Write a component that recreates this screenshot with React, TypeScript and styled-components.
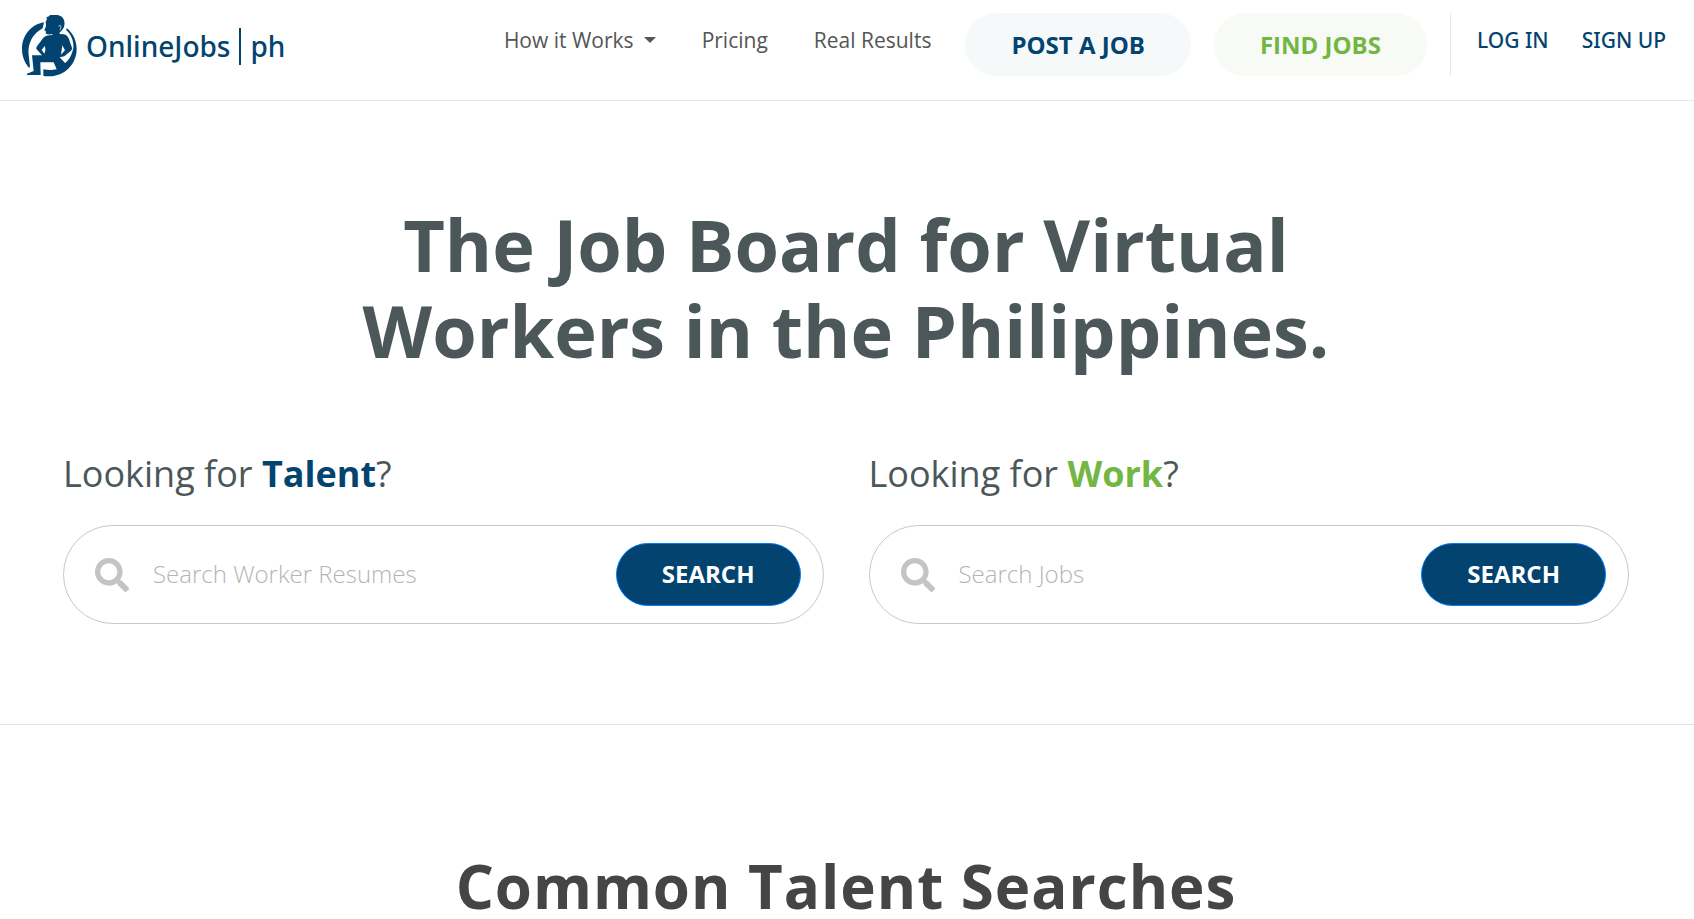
import React from "react";
import styled, { createGlobalStyle } from "styled-components";
import { FaSearch } from "react-icons/fa";

const navy = "#02446f";
const green = "#72b644";
const slate = "#4b5759";

const GlobalStyle = createGlobalStyle`
  *, *::before, *::after { box-sizing: border-box; }
  body {
    margin: 0;
    background: #fff;
    color: ${slate};
    font-family: "Open Sans", "Noto Sans", sans-serif;
    overflow-x: hidden;
  }
  h1, h2 { margin: 0; }
  a { text-decoration: none; }
`;

const Header = styled.header`
  display: flex;
  justify-content: space-between;
  align-items: flex-start;
  padding: 13px 28px 23px 21px;
  border-bottom: 1px solid #e8e8e8;
`;

const Logo = styled.a`
  display: flex;
  align-items: center;
  gap: 9px;
  padding-top: 2px;
  color: ${navy};
  font-family: "Noto Sans", "Open Sans", sans-serif;
  font-weight: 500;
  font-size: 28px;
  line-height: 36px;
`;

const LogoDivider = styled.span`
  width: 2px;
  height: 37px;
  background: ${navy};
`;

const Nav = styled.nav`
  display: flex;
  align-items: flex-start;
  white-space: nowrap;
`;

const NavLinks = styled.div`
  display: flex;
  gap: 46px;
  margin-right: 34px;
`;

const NavLink = styled.a`
  display: flex;
  align-items: center;
  gap: 10px;
  padding-top: 12px;
  font-size: 21px;
  line-height: 30px;
  color: #555;
`;

const AccountLink = styled(NavLink)`
  font-family: "Noto Sans", "Open Sans", sans-serif;
  font-weight: 500;
  color: ${navy};
`;

const Caret = styled.span`
  border-top: 6px solid #555;
  border-left: 6px solid transparent;
  border-right: 6px solid transparent;
`;

const PillLink = styled.a<{ $tone: "navy" | "green" }>`
  margin-right: 23px;
  padding: 15px 46px;
  border-radius: 32px;
  font-size: 24px;
  line-height: 33px;
  font-weight: 700;
  color: ${(p) => (p.$tone === "navy" ? navy : green)};
  background: ${(p) => (p.$tone === "navy" ? "#f5f9fa" : "#f8faf5")};
`;

const Account = styled.div`
  display: flex;
  align-items: flex-start;
  gap: 33px;
  height: 63px;
  padding-left: 26px;
  border-left: 1px solid #e8e8e8;
`;

const Hero = styled.section`
  padding: 100px 65px 100px 63px;
  border-bottom: 1px solid #e0e2e3;
`;

const Title = styled.h1`
  max-width: 1040px;
  margin: 0 auto 78px;
  font-size: 72px;
  line-height: 86px;
  font-weight: 700;
  text-align: center;
`;

const SearchGrid = styled.div`
  display: grid;
  grid-template-columns: 1fr 1fr;
  gap: 45px;
`;

const SearchLabel = styled.label`
  display: block;
  margin-bottom: 28px;
  font-size: 36px;
  line-height: 46px;
  font-weight: 400;
`;

const Accent = styled.strong<{ $color: string }>`
  font-weight: 700;
  color: ${(p) => p.$color};
`;

const SearchBox = styled.div`
  display: flex;
  align-items: center;
  padding: 17px 22px 17px 31px;
  border: 1px solid #bccbd7;
  border-radius: 50px;
`;

const SearchIcon = styled(FaSearch)`
  flex: none;
  color: #c4c4c4;
`;

const SearchInput = styled.input`
  flex: 1;
  min-width: 0;
  margin: 0 24px;
  padding: 0 0 2px;
  border: 0;
  outline: 0;
  background: transparent;
  font: 300 24px/33px "Open Sans", "Noto Sans", sans-serif;
  color: ${slate};
  &::placeholder { color: #b4b4b4; opacity: 1; }
`;

const SearchButton = styled.button`
  padding: 13px 45px 15px;
  border: 1px solid #007bff;
  border-radius: 32px;
  background: ${navy};
  color: #fff;
  font: 700 24px/33px "Open Sans", "Noto Sans", sans-serif;
  cursor: pointer;
`;

const Common = styled.section`
  padding: 125px 65px 0 63px;
`;

const CommonTitle = styled.h2`
  font-size: 60px;
  line-height: 72px;
  font-weight: 700;
  letter-spacing: 1px;
  text-align: center;
  color: #454545;
`;

function LogoMark() {
  return (
    <svg width="56" height="62" viewBox="63 45 168 186" fill={navy} aria-hidden="true">
      <path d="M132 67C94 73 66 106 66 147c0 22 8 41 21 56l3-2-4-36c-4-34 12-64 42-80z" />
      <path d="M201 85c18 15 29 37 29 62 0 45-36 82-82 82-6 0-12 0-18-2v-19c13 3 27 3 40 0l-9-21h-40l1 38H81v-4l20-8-5-47h30l-16-18c-2-3-1-6 1-9l18-24c5-6 11-8 20-9l8-1v-3c-6 2-14 2-19-1l-1-8-4-2 5-12-1-13 4-9-2-5 8-3 3-4c14-3 29-1 37 7 8 9 8 21 4 31l-7 11-5 3v5l12 1c7 1 12 5 15 12l10 28c1 4 0 6-3 9l-20 17-14 3 16 17c9-7 16-17 20-28 11-25 4-52-17-72zM134 138l-9 12 8 11c4-8 4-16 1-23zm53-2-4 28 12-13z" />
      <path d="m175 79 6-3 2 5-3 10" fill="none" stroke="#fff" strokeWidth="2" />
    </svg>
  );
}

type SearchProps = { id: string; word: string; color: string; placeholder: string };

function SearchForm({ id, word, color, placeholder }: SearchProps) {
  return (
    <form onSubmit={(e) => e.preventDefault()}>
      <SearchLabel htmlFor={id}>
        Looking for <Accent $color={color}>{word}</Accent>?
      </SearchLabel>
      <SearchBox>
        <SearchIcon size={34} />
        <SearchInput id={id} type="text" placeholder={placeholder} />
        <SearchButton type="submit">SEARCH</SearchButton>
      </SearchBox>
    </form>
  );
}

export default function App() {
  return (
    <>
      <GlobalStyle />
      <Header>
        <Logo href="#">
          <LogoMark />
          <span>OnlineJobs</span>
          <LogoDivider />
          <span>ph</span>
        </Logo>
        <Nav>
          <NavLinks>
            <NavLink href="#">
              How it Works <Caret />
            </NavLink>
            <NavLink href="#">Pricing</NavLink>
            <NavLink href="#">Real Results</NavLink>
          </NavLinks>
          <PillLink href="#" $tone="navy">POST A JOB</PillLink>
          <PillLink href="#" $tone="green">FIND JOBS</PillLink>
          <Account>
            <AccountLink href="#">LOG IN</AccountLink>
            <AccountLink href="#">SIGN UP</AccountLink>
          </Account>
        </Nav>
      </Header>
      <main>
        <Hero>
          <Title>The Job Board for Virtual Workers in the Philippines.</Title>
          <SearchGrid>
            <SearchForm id="talent" word="Talent" color={navy} placeholder="Search Worker Resumes" />
            <SearchForm id="work" word="Work" color={green} placeholder="Search Jobs" />
          </SearchGrid>
        </Hero>
        <Common>
          <CommonTitle>Common Talent Searches</CommonTitle>
        </Common>
      </main>
    </>
  );
}
